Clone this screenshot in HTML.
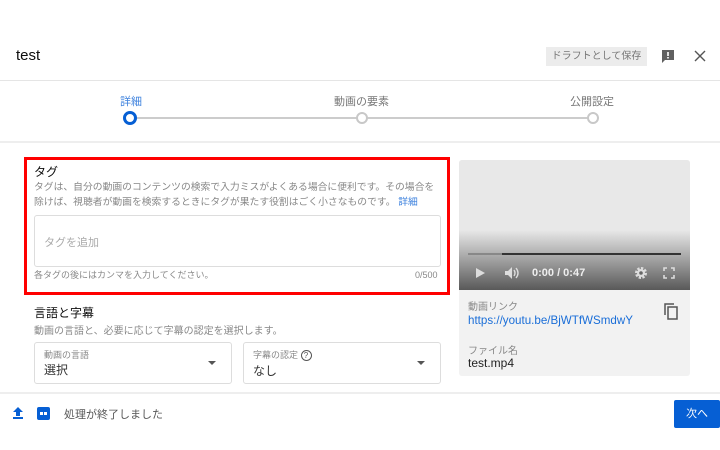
<!DOCTYPE html>
<html><head><meta charset="utf-8"><style>
*{margin:0;padding:0;box-sizing:border-box}
body{width:720px;height:450px;background:#fff;font-family:"Liberation Sans","Noto Sans CJK JP",sans-serif;position:relative;overflow:hidden;color:#0d0d0d}
.a{position:absolute;white-space:nowrap}
.g{color:#888}
</style></head><body>
<div class="a" style="left:16px;top:47px;font-size:15px">test</div>
<div class="a" style="left:546px;top:47px;width:101px;height:19px;background:#ececec;font-size:10px;color:#777;line-height:19px;text-align:center">ドラフトとして保存</div>
<svg class="a" style="left:660px;top:48px" width="16" height="16" viewBox="0 0 16 16"><path d="M2 2h12v10H5l-3 3z" fill="#606060"/><rect x="7.2" y="4" width="1.6" height="4" fill="#fff"/><rect x="7.2" y="9" width="1.6" height="1.5" fill="#fff"/></svg>
<svg class="a" style="left:694px;top:50px" width="12" height="12" viewBox="0 0 12 12"><path d="M1 1L11 11M11 1L1 11" stroke="#555" stroke-width="1.4"/></svg>
<div class="a" style="left:0;top:80px;width:720px;height:1px;background:#e5e5e5"></div>
<div class="a" style="left:120px;top:93px;font-size:11px;color:#3e82de">詳細</div>
<div class="a" style="left:334px;top:93px;font-size:11px;color:#777">動画の要素</div>
<div class="a" style="left:570px;top:93px;font-size:11px;color:#777">公開設定</div>
<div class="a" style="left:136px;top:117px;width:452px;height:2px;background:#ccc"></div>
<div class="a" style="left:123px;top:111px;width:14px;height:14px;border:3px solid #065fd4;border-radius:50%;background:#fff"></div>
<div class="a" style="left:356px;top:112px;width:12px;height:12px;border:2px solid #c8c8c8;border-radius:50%;background:#fff"></div>
<div class="a" style="left:587px;top:112px;width:12px;height:12px;border:2px solid #c8c8c8;border-radius:50%;background:#fff"></div>
<div class="a" style="left:0;top:141px;width:720px;height:2px;background:#eee"></div>
<div class="a" style="left:24px;top:157px;width:426px;height:138px;border:3px solid #f00"></div>
<div class="a" style="left:34px;top:163px;font-size:12px">タグ</div>
<div class="a g" style="left:34px;top:180px;font-size:9.8px;line-height:15px">タグは、自分の動画のコンテンツの検索で入力ミスがよくある場合に便利です。その場合を<br>除けば、視聴者が動画を検索するときにタグが果たす役割はごく小さなものです。 <span style="color:#3e82de">詳細</span></div>
<div class="a" style="left:34px;top:215px;width:407px;height:52px;border:1px solid #ddd;border-radius:3px"></div>
<div class="a" style="left:44px;top:234px;font-size:11px;color:#aaa">タグを追加</div>
<div class="a g" style="left:34px;top:268px;font-size:9px">各タグの後にはカンマを入力してください。</div>
<div class="a g" style="left:415px;top:270px;font-size:9px">0/500</div>
<div class="a" style="left:34px;top:304px;font-size:12px">言語と字幕</div>
<div class="a g" style="left:34px;top:322px;font-size:10px">動画の言語と、必要に応じて字幕の認定を選択します。</div>
<div class="a" style="left:34px;top:342px;width:198px;height:42px;border:1px solid #ddd;border-radius:3px"></div>
<div class="a g" style="left:44px;top:348px;font-size:9px">動画の言語</div>
<div class="a" style="left:44px;top:361px;font-size:12px;color:#333">選択</div>
<div class="a" style="left:208px;top:361px;border:4px solid transparent;border-top:4px solid #555"></div>
<div class="a" style="left:243px;top:342px;width:198px;height:42px;border:1px solid #ddd;border-radius:3px"></div>
<div class="a g" style="left:253px;top:348px;font-size:9px">字幕の認定 <span style="display:inline-block;width:11px;height:11px;border:1px solid #555;border-radius:50%;font-size:8px;line-height:9px;text-align:center;color:#555">?</span></div>
<div class="a" style="left:253px;top:362px;font-size:12px;color:#333">なし</div>
<div class="a" style="left:417px;top:361px;border:4px solid transparent;border-top:4px solid #555"></div>
<div class="a" style="left:459px;top:160px;width:231px;height:216px;background:#f2f2f2;border-radius:3px;overflow:hidden">
<div style="height:130px;background:linear-gradient(#e8e8e8 0,#e8e8e8 70px,#595959 130px)"></div>
</div>
<div class="a" style="left:468px;top:253px;width:213px;height:2px;background:#333"></div>
<div class="a" style="left:468px;top:253px;width:34px;height:2px;background:#888"></div>
<svg class="a" style="left:474px;top:267px" width="12" height="12"><path d="M2 1L11 6L2 11z" fill="#ddd"/></svg>
<svg class="a" style="left:504px;top:266px" width="16" height="14" viewBox="0 0 16 14"><path d="M1 5h3l4-4v12l-4-4H1z" fill="#ddd"/><path d="M10 4q2 3 0 6M12 2q4 5 0 10" stroke="#ddd" stroke-width="1.4" fill="none"/></svg>
<div class="a" style="left:532px;top:267px;font-size:11px;color:#eee;font-weight:bold">0:00 / 0:47</div>
<svg class="a" style="left:634px;top:266px" width="14" height="14" viewBox="0 0 14 14"><circle cx="7" cy="7" r="4.5" fill="none" stroke="#ddd" stroke-width="3" stroke-dasharray="2.2 1.3"/><circle cx="7" cy="7" r="4" fill="#ddd"/><circle cx="7" cy="7" r="1.8" fill="#666"/></svg>
<svg class="a" style="left:663px;top:267px" width="12" height="12"><path d="M1 4V1h3M8 1h3v3M11 8v3H8M4 11H1V8" stroke="#ddd" stroke-width="1.6" fill="none"/></svg>
<div class="a g" style="left:468px;top:298px;font-size:10px">動画リンク</div>
<div class="a" style="left:468px;top:314px;font-size:11.6px;color:#1a6ed8">https://youtu.be/BjWTfWSmdwY</div>
<svg class="a" style="left:663px;top:302px" width="16" height="18" viewBox="0 0 16 18"><path d="M2 13V2h9" stroke="#555" stroke-width="1.5" fill="none"/><rect x="5" y="5" width="9" height="12" stroke="#555" stroke-width="1.5" fill="none"/></svg>
<div class="a g" style="left:468px;top:342px;font-size:10px">ファイル名</div>
<div class="a" style="left:468px;top:356px;font-size:12px;color:#222">test.mp4</div>
<div class="a" style="left:0;top:392px;width:720px;height:2px;background:#eee"></div>
<svg class="a" style="left:12px;top:406px" width="12" height="13"><path d="M6 1L11 6H8v4H4V6H1z" fill="#065fd4"/><rect x="1" y="11" width="10" height="2" fill="#065fd4"/></svg>
<div class="a" style="left:37px;top:407px;width:13px;height:13px;background:#065fd4;border-radius:2px"><div style="position:absolute;left:3px;top:5px;width:3px;height:3px;background:#fff"></div><div style="position:absolute;left:7px;top:5px;width:3px;height:3px;background:#fff"></div></div>
<div class="a" style="left:64px;top:406px;font-size:11px;color:#555">処理が終了しました</div>
<div class="a" style="left:674px;top:400px;width:46px;height:28px;background:#065fd4;color:#fff;font-size:11px;line-height:28px;text-align:center;border-radius:2px">次へ</div>
</body></html>
